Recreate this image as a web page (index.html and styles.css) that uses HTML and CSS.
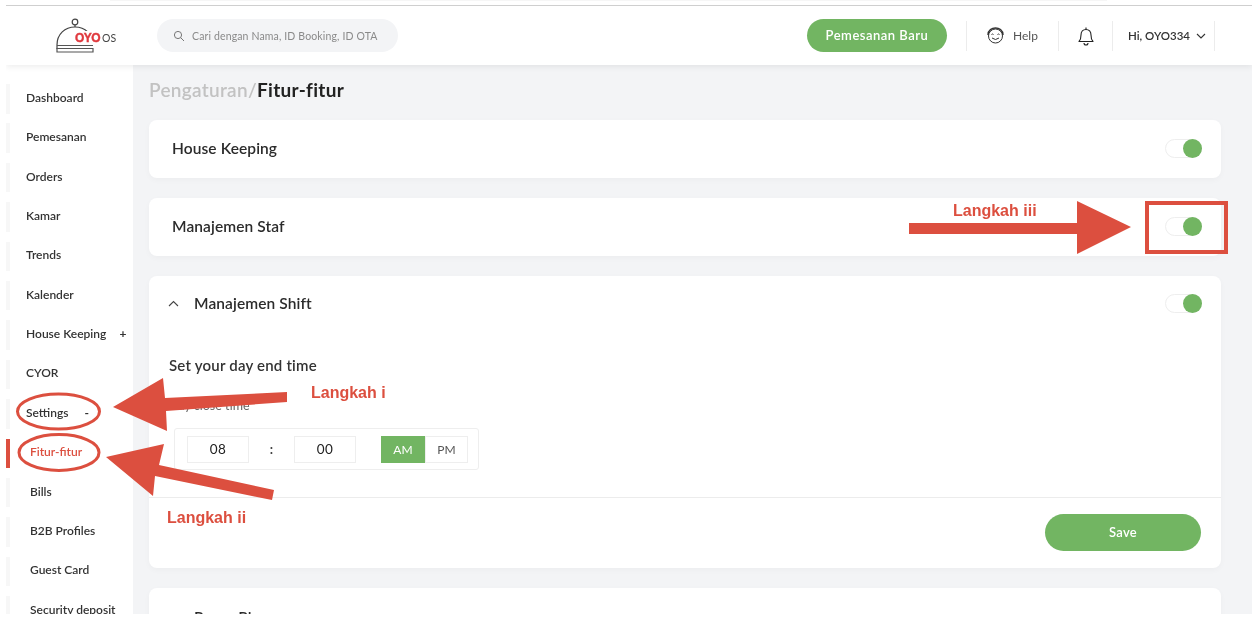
FILE: index.html
```html
<!DOCTYPE html>
<html lang="id">
<head>
<meta charset="utf-8">
<title>Fitur-fitur</title>
<link rel="stylesheet" href="styles.css">
</head>
<body>
<div class="edge"></div>
<div class="app">
  <header class="header">
    <div class="logo">
      <svg class="logo-mark" width="62" height="40" viewBox="0 0 62 40">
        <circle cx="20" cy="6" r="2.800" fill="none" stroke="#444" stroke-width="1.200"/>
        <path d="M20 9v2" stroke="#444" stroke-width="1.200"/>
        <path d="M2 33V29C2 18 10 11 20 11s18 7 18 18" fill="none" stroke="#444" stroke-width="1.200"/>
        <path d="M2 29.500h36M2 32.500h36v3.500H2z" fill="none" stroke="#555" stroke-width="1.200"/>
      </svg>
      <span class="logo-oyo">OYO</span><span class="logo-os">OS</span>
    </div>
    <div class="search">
      <svg width="12" height="12" viewBox="0 0 12 12"><circle cx="5" cy="5" r="3.600" fill="none" stroke="#777" stroke-width="1"/><path d="M7.700 7.700L11 11" stroke="#777" stroke-width="1"/></svg>
      <span>Cari dengan Nama, ID Booking, ID OTA</span>
    </div>
    <div class="header-right">
      <button class="btn btn-new">Pemesanan Baru</button>
      <span class="sep sep-first"></span>
      <div class="help">
        <svg width="19" height="18" viewBox="0 0 19 18"><circle cx="9.500" cy="9" r="7" fill="none" stroke="#333" stroke-width="1"/><path d="M2 8C2 3 6 1 9.500 1S17 3 17 8" fill="none" stroke="#333" stroke-width="1.400"/><path d="M5.500 7.500q1-1 2 0M11.500 7.500q1-1 2 0M6 11q3.500 3 7 0" fill="none" stroke="#333" stroke-width="1"/></svg>
        <span>Help</span>
      </div>
      <span class="sep"></span>
      <div class="bell">
        <svg width="16" height="20" viewBox="0 0 16 20"><path d="M1 15.500c1.500-1.500 2-3 2-6.500 0-3.500 2-5.500 5-5.500s5 2 5 5.500c0 3.500.5 5 2 6.500z" fill="none" stroke="#222" stroke-width="1.100" stroke-linejoin="round"/><path d="M8 1.500v2M6 17a2 2 0 0 0 4 0" fill="none" stroke="#222" stroke-width="1.100"/></svg>
      </div>
      <span class="sep"></span>
      <div class="user">
        <span>Hi, OYO334</span>
        <svg width="10" height="6" viewBox="0 0 10 6"><path d="M1 1l4 4 4-4" fill="none" stroke="#333" stroke-width="1.100"/></svg>
      </div>
      <span class="sep"></span>
    </div>
  </header>
  <div class="body">
    <nav class="side">
      <div class="nav">Dashboard</div>
      <div class="nav">Pemesanan</div>
      <div class="nav">Orders</div>
      <div class="nav">Kamar</div>
      <div class="nav">Trends</div>
      <div class="nav">Kalender</div>
      <div class="nav">House Keeping<b class="nav-mark nav-plus">+</b></div>
      <div class="nav">CYOR</div>
      <div class="nav">Settings<b class="nav-mark nav-minus">-</b></div>
      <div class="nav sub active">Fitur-fitur</div>
      <div class="nav sub">Bills</div>
      <div class="nav sub">B2B Profiles</div>
      <div class="nav sub">Guest Card</div>
      <div class="nav sub">Security deposit</div>
    </nav>
    <main class="main">
      <h1 class="crumb"><span class="crumb-muted">Pengaturan/</span>Fitur-fitur</h1>
      <section class="card row">
        <span class="title">House Keeping</span>
        <span class="toggle"></span>
      </section>
      <section class="card row">
        <span class="title">Manajemen Staf</span>
        <span class="toggle"></span>
      </section>
      <section class="card shift">
        <div class="row shift-head">
          <span class="title with-chev"><svg width="11" height="7" viewBox="0 0 11 7"><path d="M1 6l4.500-4.500L10 6" fill="none" stroke="#444" stroke-width="1.100"/></svg>Manajemen Shift</span>
          <span class="toggle"></span>
        </div>
        <div class="shift-body">
          <h2 class="set-title">Set your day end time</h2>
          <p class="set-label">Day close time</p>
          <div class="time-box">
            <span class="time-input">08</span>
            <span class="colon">:</span>
            <span class="time-input time-input-b">00</span>
            <span class="ampm on">AM</span>
            <span class="ampm">PM</span>
          </div>
        </div>
        <div class="shift-foot">
          <button class="btn btn-save">Save</button>
        </div>
      </section>
      <section class="card row last">
        <span class="title with-chev"><svg width="11" height="7" viewBox="0 0 11 7"><path d="M1 6l4.500-4.500L10 6" fill="none" stroke="#444" stroke-width="1.100"/></svg>Room Plan</span>
      </section>
    </main>
  </div>
</div>
<svg class="notes" width="1252" height="622" viewBox="0 0 1252 622">
  <g fill="#dc4f3f">
    <polygon points="113,407 163,378 165,398 287,392 287,402 166,411 167,431"/>
    <polygon points="106,457 164,444 159,465 274,490 272,500 155,476 153,496"/>
    <polygon points="909,223 1077,223 1077,201 1131,227 1077,254 1077,234 909,234"/>
  </g>
  <g fill="none" stroke="#dc4f3f">
    <rect x="1147" y="203" width="79" height="49" stroke-width="4"/>
    <ellipse cx="58.500" cy="411.500" rx="41" ry="17.500" stroke-width="3"/>
    <ellipse cx="59" cy="452.500" rx="40" ry="18" stroke-width="3"/>
  </g>
</svg>
<span class="note note-i">Langkah i</span>
<span class="note note-ii">Langkah ii</span>
<span class="note note-iii">Langkah iii</span>
</body>
</html>
```
FILE: styles.css
```css
* { box-sizing: border-box; }
html, body { margin: 0; height: 622px; overflow: hidden; background: #fff; }
body { position: relative; font-family: Lato, "Open Sans", sans-serif; color: #2b2b2b; filter: blur(.4px); }

.edge { height: 6px; margin-left: 6px; border-bottom: 1px solid #cfcfcf; }
.edge::before { content: ""; display: block; height: 1px; margin: 0 145px 0 104px; background: #f6f6f6; }
.app { margin-left: 6px; height: 608px; display: flex; flex-direction: column; overflow: hidden; }

.header { height: 59px; flex: none; display: flex; align-items: center; background: #fff; box-shadow: 0 2px 6px rgba(0,0,0,.07); position: relative; z-index: 2; }
.logo { width: 151px; height: 100%; flex: none; position: relative; }
.logo-mark { position: absolute; left: 49px; top: 10px; }
.logo-oyo { position: absolute; left: 68px; top: 25px; font: 700 12px/14px "Liberation Sans", sans-serif; letter-spacing: -.5px; color: #e0393e; background: #fff; padding: 0 1px; -webkit-text-stroke: .4px #e0393e; }
.logo-os { position: absolute; left: 96px; top: 25px; font: 400 10.500px/14px Lato, sans-serif; color: #444; }
.search { width: 241px; height: 33px; border-radius: 17px; background: #f3f4f6; display: flex; align-items: center; gap: 7px; padding-left: 16px; font-size: 10.500px; letter-spacing: .14px; color: #8a8a8a; }
.search svg { flex: none; }
.header-right { margin-left: auto; margin-right: 37px; display: flex; align-items: center; height: 100%; }
.btn { border: 0; background: #72b562; color: #fff; font-family: inherit; font-weight: 600; border-radius: 20px; cursor: pointer; padding: 0 0 2px; }
.btn-new { width: 140px; height: 33px; font-size: 13px; letter-spacing: .5px; }
.sep { width: 1px; height: 30px; background: #ececec; flex: none; }
.sep-first { margin-left: 19px; }
.help { width: 91px; display: flex; align-items: center; gap: 8px; padding-left: 19px; font-size: 12px; color: #555; }
.bell { width: 53px; display: flex; justify-content: center; padding-top: 1px; }
.user { width: 101px; display: flex; align-items: center; gap: 6px; padding-left: 15px; font-size: 11.500px; font-weight: 600; color: #333; }

.body { flex: 1; min-height: 0; display: flex; }
.side { width: 127px; flex: none; padding-top: 19px; display: flex; flex-direction: column; gap: 9.900px; background: #fff; overflow: hidden; }
.nav { height: 29.500px; flex: none; display: flex; align-items: center; border-left: 4px solid #f7f7f7; padding: 0 0 3px 16px; font-size: 12px; font-weight: 600; color: #333; white-space: nowrap; }
.sub { padding-left: 20px; }
.active { border-left-color: #dc4f3f; color: #dc4f3f; }
.nav-mark { font-weight: 700; }
.nav-plus { margin-left: 13px; }
.nav-minus { margin-left: 16px; }

.main { flex: 1; min-width: 0; padding: 0 31px 0 16px; background: #f3f4f6; overflow: hidden; }
.crumb { margin: 0; height: 55px; padding-top: 11px; font-size: 19px; line-height: 28px; font-weight: 700; letter-spacing: .3px; color: #222; }
.crumb-muted { color: #c2c2c2; font-weight: 600; }
.card { background: #fff; border-radius: 8px; margin-bottom: 20px; box-shadow: 0 2px 6px rgba(0,0,0,.03); }
.row { height: 58px; display: flex; align-items: center; justify-content: space-between; padding: 0 19px 0 23px; }
.title { font-size: 15.500px; font-weight: 600; letter-spacing: .1px; color: #2b2b2b; margin-bottom: 2px; }
.with-chev { display: flex; align-items: center; gap: 15px; margin-left: -4px; }
.toggle { width: 37px; height: 19px; border-radius: 10px; border: 1px solid #eeeeee; position: relative; margin-bottom: 1px; }
.toggle::after { content: ""; position: absolute; right: -1px; top: -1px; width: 19px; height: 19px; border-radius: 50%; background: #72b562; }
.shift { height: 292px; }
.shift-head { height: 56px; }
.shift-body { height: 166px; padding: 22px 0 0 20px; border-bottom: 1px solid #ececec; }
.set-title { margin: 0; font-size: 15px; line-height: 22px; font-weight: 600; letter-spacing: .2px; color: #333; }
.set-label { margin: 22px 0 0; font-size: 12.500px; line-height: 16px; color: #666; }
.time-box { margin: 14px 0 0 5px; width: 305px; height: 42px; border: 1px solid #eeeeee; border-radius: 3px; display: flex; align-items: center; padding-left: 12px; }
.time-input { width: 62px; height: 27px; border: 1px solid #eeeeee; display: flex; align-items: center; justify-content: center; font-size: 13.500px; letter-spacing: .5px; color: #222; }
.colon { width: 45px; text-align: center; font-size: 13px; font-weight: 700; color: #444; }
.time-input-b { margin-right: 25px; }
.ampm { width: 43px; height: 27px; border: 1px solid #eeeeee; display: flex; align-items: center; justify-content: center; font-size: 12px; color: #555; }
.ampm.on { width: 44px; background: #72b562; border-color: #72b562; color: #fff; }
.shift-foot { display: flex; justify-content: flex-end; padding: 16px 20px 0 0; }
.btn-save { width: 156px; height: 37px; font-size: 13px; letter-spacing: .3px; }
.last { align-items: flex-start; padding-top: 20px; }

.notes { position: absolute; left: 0; top: 0; pointer-events: none; }
.note { position: absolute; font: 700 16px/18px "Liberation Sans", Arial, sans-serif; color: #dc4f3f; white-space: nowrap; }
.note-i { left: 311px; top: 384px; }
.note-ii { left: 167px; top: 509px; }
.note-iii { left: 953px; top: 202px; }
```
